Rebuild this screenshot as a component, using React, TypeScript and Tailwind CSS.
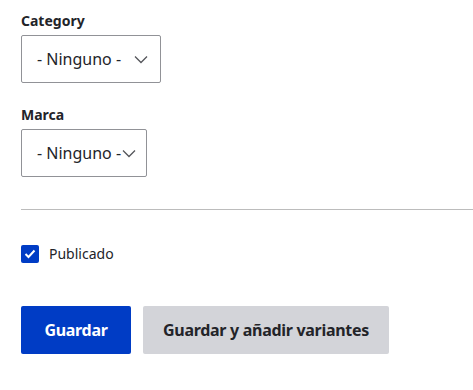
import React from "react";

function Chevron() {
  return (
    <svg width="14" height="9" viewBox="0 0 14 9" className="shrink-0">
      <path d="M1 1.5 L7 7.5 L13 1.5" fill="none" stroke="#55565b" strokeWidth="1.3" />
    </svg>
  );
}

function Select({ width, gap }: { width: string; gap: string }) {
  return (
    <div className={`flex items-center h-[48px] border border-[#919297] rounded-[2px] bg-white pl-[15px] ${width}`}>
      <span className="text-[16px] text-[#232429] leading-none">- Ninguno -</span>
      <span className={gap} />
      <Chevron />
    </div>
  );
}

export default function App() {
  const font = { fontFamily: '"Noto Sans", "Open Sans", sans-serif' };
  return (
    <div className="bg-white w-[473px] h-[390px] pt-[11px] pl-[21px] text-[#232429]" style={font}>
      <div className="text-[14px] font-bold leading-[20px] mb-[4px]">Category</div>
      <Select width="w-[140px]" gap="w-[13px]" />

      <div className="text-[14px] font-bold leading-[20px] mt-[22px] mb-[4px]">Marca</div>
      <Select width="w-[126px]" gap="w-[1px]" />

      <div className="h-px bg-[#bcbcbc] mt-[32px]" />

      <label className="flex items-center gap-[10px] mt-[33px]">
        <span className="w-[18px] h-[18px] rounded-[2px] bg-[#003cc5] flex items-center justify-center">
          <svg width="12" height="10" viewBox="0 0 12 10">
            <path d="M1.5 5 L4.5 8 L10.5 1.5" fill="none" stroke="white" strokeWidth="2" />
          </svg>
        </span>
        <span className="text-[14px] text-[#232429]">Publicado</span>
      </label>

      <div className="flex gap-[12px] mt-[42px]">
        <button className="h-[48px] w-[110px] rounded-[2px] bg-[#003cc5] text-white text-[16px] font-bold tracking-[-0.3px]">
          Guardar
        </button>
        <button className="h-[48px] w-[246px] rounded-[2px] bg-[#d3d4d9] text-[#232429] text-[16px] font-bold tracking-[-0.3px]">
          Guardar y añadir variantes
        </button>
      </div>
    </div>
  );
}
